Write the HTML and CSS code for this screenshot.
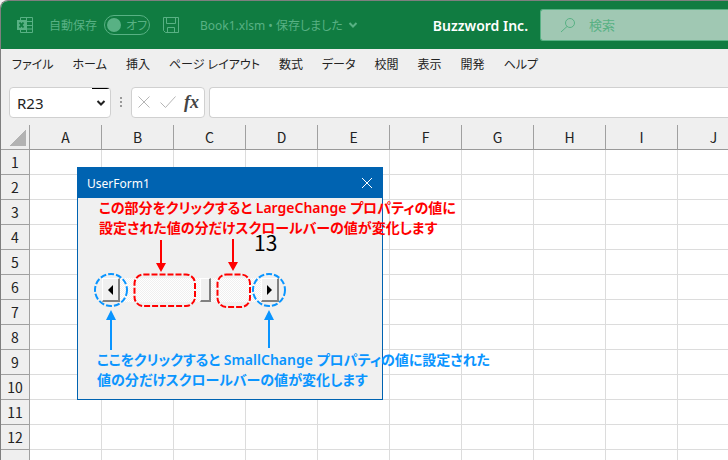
FILE: index.html
```html
<!DOCTYPE html>
<html lang="ja">
	<head>
		<meta charset="utf-8">
		<title>Book1.xlsm</title>
		<link rel="stylesheet" href="styles.css">
	</head>
	<body>
		<div class="window">
			<header class="title-bar">
				<svg class="icon" width="18" height="18" viewBox="0 0 18 18">
					<path d="M4.5 4V1.5h12v15h-12V14M10.500 1.500v15M4.500 5.500h12M8 9.500h8.500M4.500 13h12" />
					<rect class="solid" x="1" y="4" width="9" height="10" />
					<path class="cut" d="M3.500 6.500l4 5M7.500 6.500l-4 5" />
				</svg>
				<label class="auto-save" for="autoSave">自動保存</label>
				<span class="toggle">
					<input type="checkbox" id="autoSave">
					<span>オフ</span>
				</span>
				<svg class="icon save" width="18" height="18" viewBox="0 0 18 18">
					<path d="M1.500 1.500h15v15H3.500l-2-2zM4.500 1.500v6h9v-6M5.500 16.500v-5h7v5" />
				</svg>
				<span class="book">Book1.xlsm • 保存しました</span>
				<svg class="icon" width="10" height="8" viewBox="0 0 10 8"><path class="thick" d="M1.500 2L5 5.500 8.500 2" /></svg>
				<span class="account">Buzzword Inc.</span>
				<div class="search">
					<svg class="icon" width="16" height="16" viewBox="0 0 16 16"><circle cx="10" cy="6" r="4.500" /><path d="M7 9.500L1 15" /></svg>
					<input type="text" placeholder="検索" aria-label="検索">
				</div>
			</header>
			<nav class="menu">
				<a href="#">ファイル</a>
				<a href="#">ホーム</a>
				<a href="#">挿入</a>
				<a href="#">ページ レイアウト</a>
				<a href="#">数式</a>
				<a href="#">データ</a>
				<a href="#">校閲</a>
				<a href="#">表示</a>
				<a href="#">開発</a>
				<a href="#">ヘルプ</a>
			</nav>
			<div class="formula-bar">
				<div class="name-box">
					<input type="text" value="R23" aria-label="名前ボックス">
					<button aria-label="名前の一覧"><svg width="10" height="8" viewBox="0 0 10 8"><path d="M1.500 2L5 5.500 8.500 2" /></svg></button>
				</div>
				<svg class="grip" width="4" height="12" viewBox="0 0 4 12"><path d="M1 1h2v2H1zM1 5h2v2H1zM1 9h2v2H1z" /></svg>
				<div class="fx-box">
					<button aria-label="キャンセル"><svg width="14" height="14" viewBox="0 0 14 14"><path d="M1.500 1.500l11 11M12.500 1.500l-11 11" /></svg></button>
					<button aria-label="入力"><svg width="18" height="14" viewBox="0 0 18 14"><path d="M1.500 7.500l5 5 10-11" /></svg></button>
					<button class="fx">fx</button>
				</div>
				<input class="formula" type="text" aria-label="数式バー">
			</div>
			<main class="sheet">
				<table>
					<thead>
						<tr><td class="corner"></td><th>A</th><th>B</th><th>C</th><th>D</th><th>E</th><th>F</th><th>G</th><th>H</th><th>I</th><th>J</th></tr>
					</thead>
					<tbody>
						<tr><th>1</th><td></td><td></td><td></td><td></td><td></td><td></td><td></td><td></td><td></td><td></td></tr>
						<tr><th>2</th><td></td><td></td><td></td><td></td><td></td><td></td><td></td><td></td><td></td><td></td></tr>
						<tr><th>3</th><td></td><td></td><td></td><td></td><td></td><td></td><td></td><td></td><td></td><td></td></tr>
						<tr><th>4</th><td></td><td></td><td></td><td></td><td></td><td></td><td></td><td></td><td></td><td></td></tr>
						<tr><th>5</th><td></td><td></td><td></td><td></td><td></td><td></td><td></td><td></td><td></td><td></td></tr>
						<tr><th>6</th><td></td><td></td><td></td><td></td><td></td><td></td><td></td><td></td><td></td><td></td></tr>
						<tr><th>7</th><td></td><td></td><td></td><td></td><td></td><td></td><td></td><td></td><td></td><td></td></tr>
						<tr><th>8</th><td></td><td></td><td></td><td></td><td></td><td></td><td></td><td></td><td></td><td></td></tr>
						<tr><th>9</th><td></td><td></td><td></td><td></td><td></td><td></td><td></td><td></td><td></td><td></td></tr>
						<tr><th>10</th><td></td><td></td><td></td><td></td><td></td><td></td><td></td><td></td><td></td><td></td></tr>
						<tr><th>11</th><td></td><td></td><td></td><td></td><td></td><td></td><td></td><td></td><td></td><td></td></tr>
						<tr><th>12</th><td></td><td></td><td></td><td></td><td></td><td></td><td></td><td></td><td></td><td></td></tr>
						<tr><th></th><td></td><td></td><td></td><td></td><td></td><td></td><td></td><td></td><td></td><td></td></tr>
					</tbody>
				</table>

				<section class="user-form">
					<div class="form-title">
						<span>UserForm1</span>
						<button aria-label="閉じる"><svg width="12" height="12" viewBox="0 0 12 12"><path d="M1 1l10 10M11 1L1 11" /></svg></button>
					</div>
					<div class="form-body">
						<output class="value" for="scroll">13</output>
						<div class="scroll-bar">
							<button aria-label="減らす"><svg width="5" height="10" viewBox="0 0 5 10"><path d="M5 0v10L0 5z" /></svg></button>
							<input type="range" id="scroll" min="0" max="21" value="13" aria-label="スクロールバー">
							<button aria-label="増やす"><svg width="5" height="10" viewBox="0 0 5 10"><path d="M0 0v10l5-5z" /></svg></button>
						</div>
					</div>

					<!-- callouts drawn over the form -->
					<svg class="marks" width="306" height="233" viewBox="77 167 306 233">
						<g class="red">
							<rect x="134.500" y="274.500" width="60.500" height="31.500" rx="9" />
							<rect x="217.500" y="274.500" width="32.500" height="32.500" rx="9" />
							<path d="M161 240v24M233 239v24" />
							<path class="head" d="M156 263h10l-5 9zM228 262h10l-5 9z" />
						</g>
						<g class="blue">
							<circle cx="111" cy="290" r="16" />
							<circle cx="269" cy="290" r="16" />
							<path d="M111 350v-32M269 348v-30" />
							<path class="head" d="M106 320h10l-5-10zM264 320h10l-5-10z" />
						</g>
					</svg>
					<p class="note large">この部分をクリックすると LargeChange プロパティの値に<br>設定された値の分だけスクロールバーの値が変化します</p>
					<p class="note small">ここをクリックすると SmallChange プロパティの値に設定された<br>値の分だけスクロールバーの値が変化します</p>
				</section>
			</main>
		</div>
	</body>
</html>
```
FILE: styles.css
```css
* {
	box-sizing: border-box;
}
body {
	margin: 0;
	background: #f3f3f3;
	font-family: "Noto Sans", "Noto Sans CJK JP", sans-serif;
	font-size: 12px;
	font-feature-settings: "palt";
	color: #222;
}
button, input {
	margin: 0;
	padding: 0;
	border: 0;
	background: none;
	font-family: inherit;
	font-feature-settings: inherit;
	color: inherit;
}
svg {
	display: block;
	flex: none;
	fill: none;
}
.window {
	display: flex;
	flex-direction: column;
	height: 100vh;
	overflow: hidden;
	border: solid #7f7f7f;
	border-width: 1px 0 0 1px;
	border-top-left-radius: 8px;
	background: #efefef;
}

/* title bar */
.title-bar {
	display: flex;
	align-items: center;
	flex: none;
	height: 48px;
	padding-left: 15px;
	background: #107c41;
	color: #58b184;
	white-space: nowrap;
}
.icon {
	stroke: #58b184;
}
.icon .solid {
	fill: #58b184;
	stroke: none;
}
.icon .cut {
	stroke: #107c41;
	stroke-width: 2;
}
.icon .thick {
	stroke-width: 2;
}
.auto-save {
	margin-left: 15px;
}
.toggle {
	display: flex;
	align-items: center;
	gap: 5px;
	width: 46px;
	height: 20px;
	margin: 0 12px 0 7px;
	padding-left: 2px;
	border: 1px solid #58b184;
	border-radius: 10px;
}
.toggle input {
	appearance: none;
	flex: none;
	width: 14px;
	height: 14px;
	border-radius: 50%;
	background: #58b184;
}
.book {
	margin: 0 5px 0 20px;
}
.account {
	margin: 0 12px 0 auto;
	font-size: 14px;
	font-weight: 600;
	color: #fff;
}
.search {
	display: flex;
	align-items: center;
	gap: 13px;
	width: 188px;
	height: 32px;
	padding-left: 19px;
	border: 1px solid #58b184;
	border-right: 0;
	border-radius: 3px 0 0 3px;
	background: #a0c8b3;
}
.search input {
	width: 100%;
	font-size: 13px;
}
.search input::placeholder {
	color: #58b184;
}

/* ribbon tabs */
.menu {
	display: flex;
	align-items: center;
	flex: none;
	gap: 19px;
	height: 34px;
	padding: 0 0 4px 11px;
	white-space: nowrap;
}
.menu a {
	color: #222;
	text-decoration: none;
}

/* formula bar */
.formula-bar {
	display: flex;
	align-items: center;
	flex: none;
	height: 42px;
	padding: 0 0 4px 8px;
}
.name-box, .fx-box, .formula {
	height: 31px;
	border: 1px solid #d0d0d0;
	border-radius: 4px;
	background: #fff;
}
.name-box {
	display: flex;
	align-items: center;
	width: 102px;
	padding: 2px 4px 0 7px;
	background: linear-gradient(#000, #000) 82px 0 / 17px 1px no-repeat #fff;
}
.name-box input {
	width: 79px;
	font-size: 15px;
}
.name-box svg {
	stroke: #222;
	stroke-width: 2;
}
.grip {
	margin: 0 8px;
	fill: #999;
}
.fx-box {
	display: flex;
	align-items: center;
	justify-content: space-between;
	width: 74px;
	padding: 0 5px;
}
.fx-box svg {
	stroke: #b5b5b5;
}
.fx {
	font: italic bold 18px/20px "Liberation Serif", serif;
	color: #444;
}
.formula {
	flex: 1;
	margin-left: 4px;
	border-right: 0;
	border-radius: 4px 0 0 4px;
}

/* sheet */
.sheet {
	position: relative;
	flex: 1;
	overflow: hidden;
}
table {
	width: 749px;
	table-layout: fixed;
	border-collapse: separate;
	border-spacing: 0;
}
td, th {
	width: 72px;
	height: 25px;
	padding: 0;
	border: solid #dcdcdc;
	border-width: 0 1px 1px 0;
	background: #fff;
	font: 14px/20px "Noto Sans CJK JP", sans-serif;
}
th, .corner {
	background: #efefef;
	border-color: #a0a0a0;
}
thead th {
	border-bottom-color: #999;
}
tbody th, .corner {
	width: 29px;
}
.corner {
	background: linear-gradient(135deg, #efefef 50%, #b3b3b3 50%) 8px 4px / 17px 17px no-repeat #efefef;
}

/* user form */
.user-form {
	position: absolute;
	left: 76px;
	top: 42px;
	width: 306px;
	height: 233px;
	border: 1px solid #0063b1;
	background: #f0f0f0;
}
.form-title {
	display: flex;
	align-items: center;
	justify-content: space-between;
	height: 30px;
	padding: 0 9px;
	background: #0063b1;
	color: #fff;
}
.form-title svg {
	stroke: #fff;
}
.form-body {
	padding: 30px 0 0 24px;
}
.value {
	display: block;
	padding-left: 152px;
	font: 21px/28px "Noto Sans CJK JP", sans-serif;
	color: #000;
}
.scroll-bar {
	display: flex;
	width: 177px;
	height: 24px;
	margin-top: 22px;
}
.scroll-bar button {
	display: flex;
	align-items: center;
	justify-content: center;
	flex: none;
	width: 18px;
	border: solid;
	border-width: 1px 2px 2px 1px;
	border-color: #fff #808080 #808080 #fff;
	background: #f0f0f0;
}
.scroll-bar svg {
	fill: #000;
}
.scroll-bar input {
	appearance: none;
	flex: 1;
	min-width: 0;
	background: repeating-conic-gradient(#fff 0 25%, #f0f0f0 0 50%) 0 0 / 2px 2px;
}
.scroll-bar input::-webkit-slider-thumb {
	appearance: none;
	width: 11px;
	height: 24px;
	border: solid;
	border-width: 1px 2px 2px 1px;
	border-color: #fff #808080 #808080 #fff;
	background: #f0f0f0;
}

/* callouts */
.marks {
	position: absolute;
	left: -1px;
	top: -1px;
	stroke-width: 2;
	pointer-events: none;
}
.marks rect, .marks circle {
	stroke-dasharray: 6 2;
}
.marks .red {
	stroke: #f00;
}
.marks .blue {
	stroke: #0a95ff;
}
.marks .head {
	stroke: none;
	fill: #f00;
}
.marks .blue .head {
	fill: #0a95ff;
}
.note {
	position: absolute;
	margin: 0;
	font-size: 14px;
	font-weight: 600;
	line-height: 20px;
	white-space: nowrap;
}
.large {
	left: 21px;
	top: 30px;
	color: #f00;
}
.small {
	left: 19px;
	top: 182px;
	color: #0a95ff;
}
```
